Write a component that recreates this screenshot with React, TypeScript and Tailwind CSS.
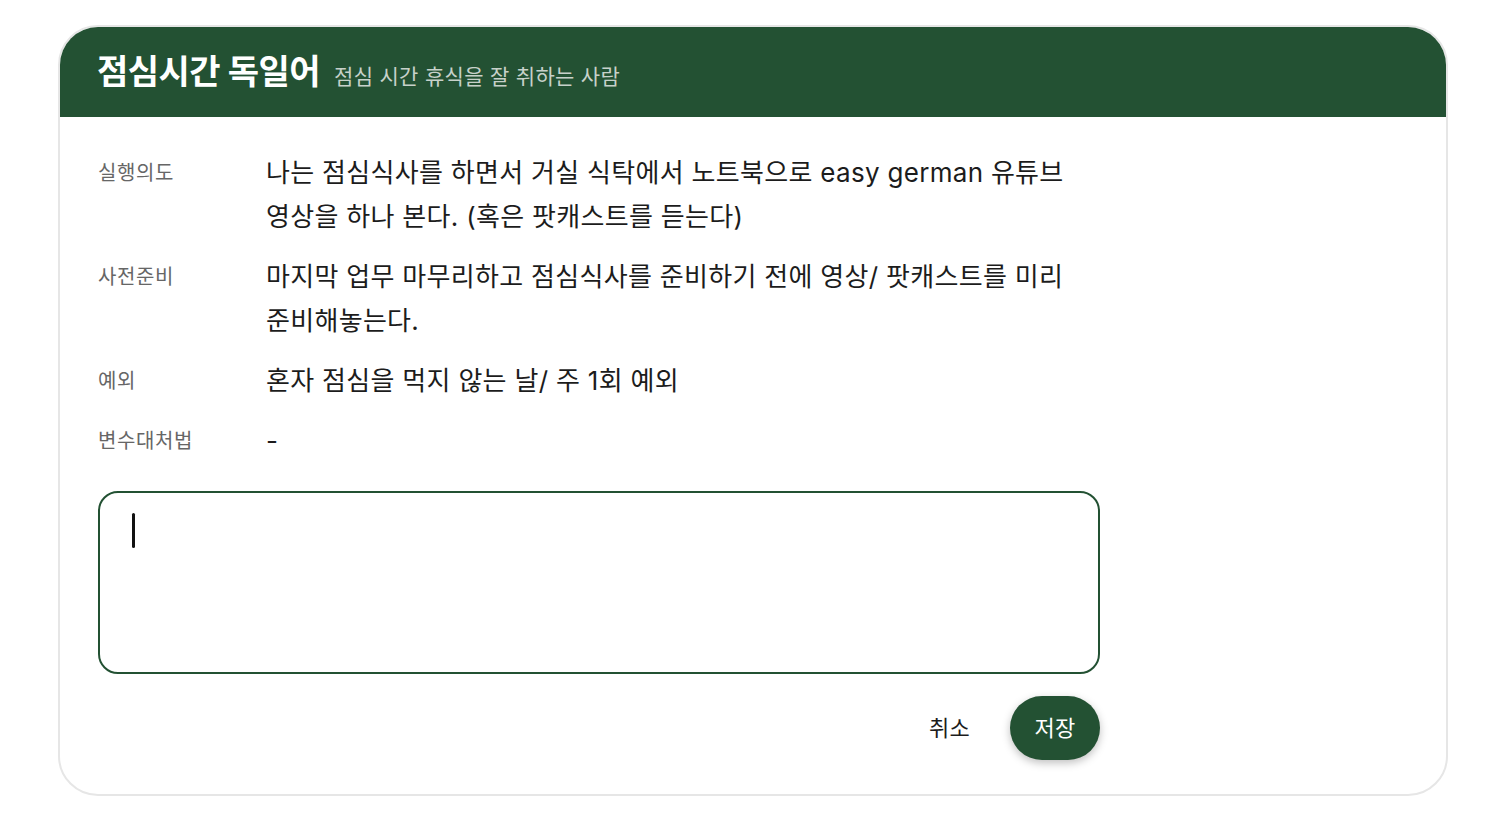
import { useState } from "react"

const rows = [
  {
    label: "실행의도",
    value: "나는 점심식사를 하면서 거실 식탁에서 노트북으로 easy german 유튜브 영상을 하나 본다. (혹은 팟캐스트를 듣는다)",
  },
  {
    label: "사전준비",
    value: "마지막 업무 마무리하고 점심식사를 준비하기 전에 영상/ 팟캐스트를 미리 준비해놓는다.",
  },
  { label: "예외", value: "혼자 점심을 먹지 않는 날/ 주 1회 예외" },
  { label: "변수대처법", value: "-" },
]

export default function App() {
  const [note] = useState("")

  return (
    <div className="min-h-screen bg-white pt-[25px] px-[58px] font-['Inter','Noto_Sans_CJK_KR',sans-serif]">
      <div className="w-[1390px] h-[771px] rounded-[40px] border-2 border-[#e6e6e6] overflow-hidden flex flex-col">
        <div className="h-[92px] bg-[#235133] flex items-center pl-[39px] -mx-[2px] -mt-[2px] rounded-t-[40px]">
          <div className="flex items-baseline gap-[14px]">
            <h1 className="text-[34px] font-bold text-white tracking-[-0.5px]">점심시간 독일어</h1>
            <span className="text-[21px] text-[#c7d1ca] tracking-[0.3px]">점심 시간 휴식을 잘 취하는 사람</span>
          </div>
        </div>

        <div className="pl-[38px] pt-[34px] w-[1040px]">
          <div className="flex flex-col gap-[16px]">
            {rows.map((row) => (
              <div key={row.label} className="grid grid-cols-[168px_1fr]">
                <div className="text-[20px] leading-[44px] text-[#666666] tracking-[0.6px]">{row.label}</div>
                <div className="text-[26px] leading-[44px] text-[#1c1c1c] tracking-[0.3px] break-keep">
                  {row.value}
                </div>
              </div>
            ))}
          </div>

          <div className="mt-[28px] h-[183px] rounded-[20px] border-2 border-[#235133] px-[32px] pt-[20px]">
            {note ? (
              <span className="text-[22px]">{note}</span>
            ) : (
              <span className="block w-[3px] h-[35px] rounded-full bg-[#111111]" />
            )}
          </div>

          <div className="mt-[22px] flex justify-end items-center gap-[20px]">
            <button className="px-[20px] h-[64px] text-[22px] text-[#1c1c1c] tracking-[0.3px]">취소</button>
            <button className="w-[90px] h-[64px] rounded-full bg-[#235133] text-white text-[22px] tracking-[0.3px] shadow-[0_3px_8px_rgba(0,0,0,0.25)]">
              저장
            </button>
          </div>
        </div>
      </div>
    </div>
  )
}
